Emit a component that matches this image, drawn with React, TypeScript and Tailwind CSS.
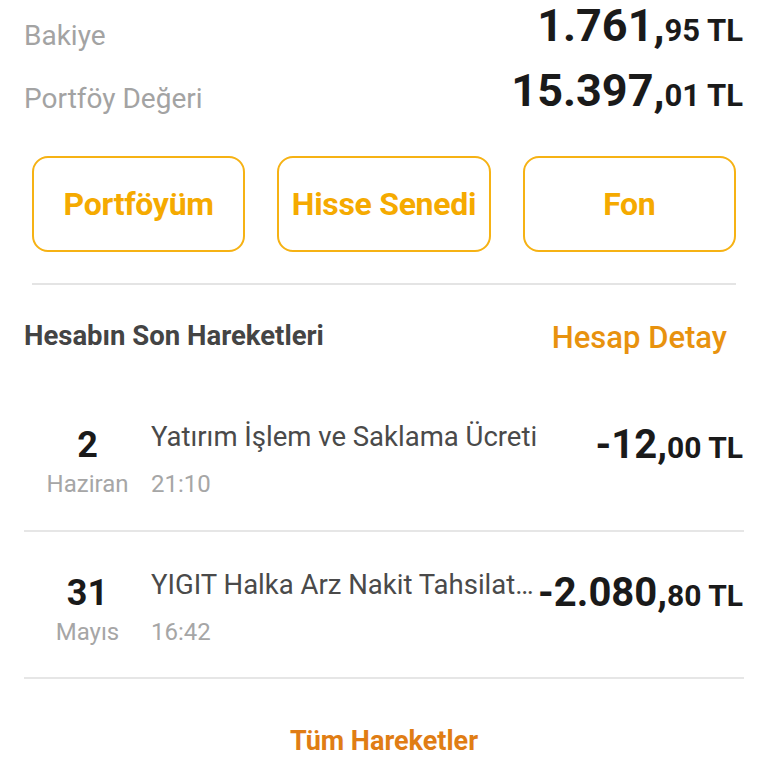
import React from "react";

type Tx = { day: string; month: string; title: string; time: string; whole: string; cents: string };

const txs: Tx[] = [
  { day: "2", month: "Haziran", title: "Yatırım İşlem ve Saklama Ücreti", time: "21:10", whole: "-12,", cents: "00 TL" },
  { day: "31", month: "Mayıs", title: "YIGIT Halka Arz Nakit Tahsilat Tutarı", time: "16:42", whole: "-2.080,", cents: "80 TL" },
];

export default function App() {
  return (
    <div className="w-[768px] h-[768px] overflow-hidden bg-white" style={{ fontFamily: "Roboto, 'Noto Sans', sans-serif" }}>
      {/* balance */}
      <div className="flex items-start justify-between pl-6 pr-[25px]">
        <span className="mt-[22px] text-[28px] leading-[28px] text-[#a3a3a3]">Bakiye</span>
        <div className="mt-[3px] flex items-baseline font-bold text-[#1a1a1a] whitespace-nowrap">
          <span className="text-[45px] leading-[45px]">1.761,</span>
          <span className="text-[31px] leading-[31px]">95 TL</span>
        </div>
      </div>
      <div className="flex items-start justify-between pl-6 pr-[25px]">
        <span className="mt-[35px] text-[28px] leading-[28px] text-[#a3a3a3]">Portföy Değeri</span>
        <div className="mt-[18px] flex items-baseline font-bold text-[#1a1a1a] whitespace-nowrap">
          <span className="text-[45px] leading-[45px]">15.397,</span>
          <span className="text-[31px] leading-[31px]">01 TL</span>
        </div>
      </div>

      <div className="grid grid-cols-3 gap-8 px-8 mt-[43px]">
        {["Portföyüm", "Hisse Senedi", "Fon"].map((t) => (
          <div key={t} className="h-[96px] rounded-[16px] border-2 border-[#f6b214] flex items-center justify-center text-[32px] font-bold text-[#f5aa00] tracking-[-0.3px]">
            {t}
          </div>
        ))}
      </div>

      <div className="mx-8 mt-[31px] h-[2px] bg-[#e4e4e4]" />

      <div className="flex items-start justify-between pl-6 pr-[41px] mt-[37px]">
        <span className="text-[27.5px] leading-[28px] font-bold text-[#444444]">Hesabın Son Hareketleri</span>
        <span className="text-[31px] leading-[31px] font-medium text-[#e8920e]">Hesap Detay</span>
      </div>

      <div className="mt-[70px]">
        {txs.map((tx, i) => (
          <div key={i}>
            {i > 0 && <div className="mx-6 h-[2px] bg-[#e6e6e6]" />}
            <div className={"flex items-start pl-6 pr-[25px] " + (i === 0 ? "h-[107px]" : "pt-[39px] h-[145px]")}>
              <div className="w-[127px] shrink-0 flex flex-col items-center">
                <span className="mt-[4px] text-[36px] leading-[36px] font-bold text-[#1a1a1a]">{tx.day}</span>
                <span className="mt-[9px] text-[24px] leading-[24px] text-[#a6a6a6]">{tx.month}</span>
              </div>
              <div className="flex-1 min-w-0 flex flex-col -mt-[4px]">
                <span className="text-[27.5px] leading-[36px] text-[#4a4a4a] truncate">{tx.title}</span>
                <span className="mt-[17px] text-[24px] leading-[24px] text-[#a6a6a6]">{tx.time}</span>
              </div>
              <div className="mt-[2px] flex items-baseline font-bold text-[#1a1a1a] whitespace-nowrap">
                <span className="text-[40px] leading-[40px]">{tx.whole}</span>
                <span className="text-[30px] leading-[30px]">{tx.cents}</span>
              </div>
            </div>
          </div>
        ))}
        <div className="mx-6 h-[2px] bg-[#e6e6e6]" />
      </div>

      <div className="flex justify-center mt-[49px]">
        <span className="text-[27px] leading-[27px] font-bold text-[#e07d14]">Tüm Hareketler</span>
      </div>
    </div>
  );
}
